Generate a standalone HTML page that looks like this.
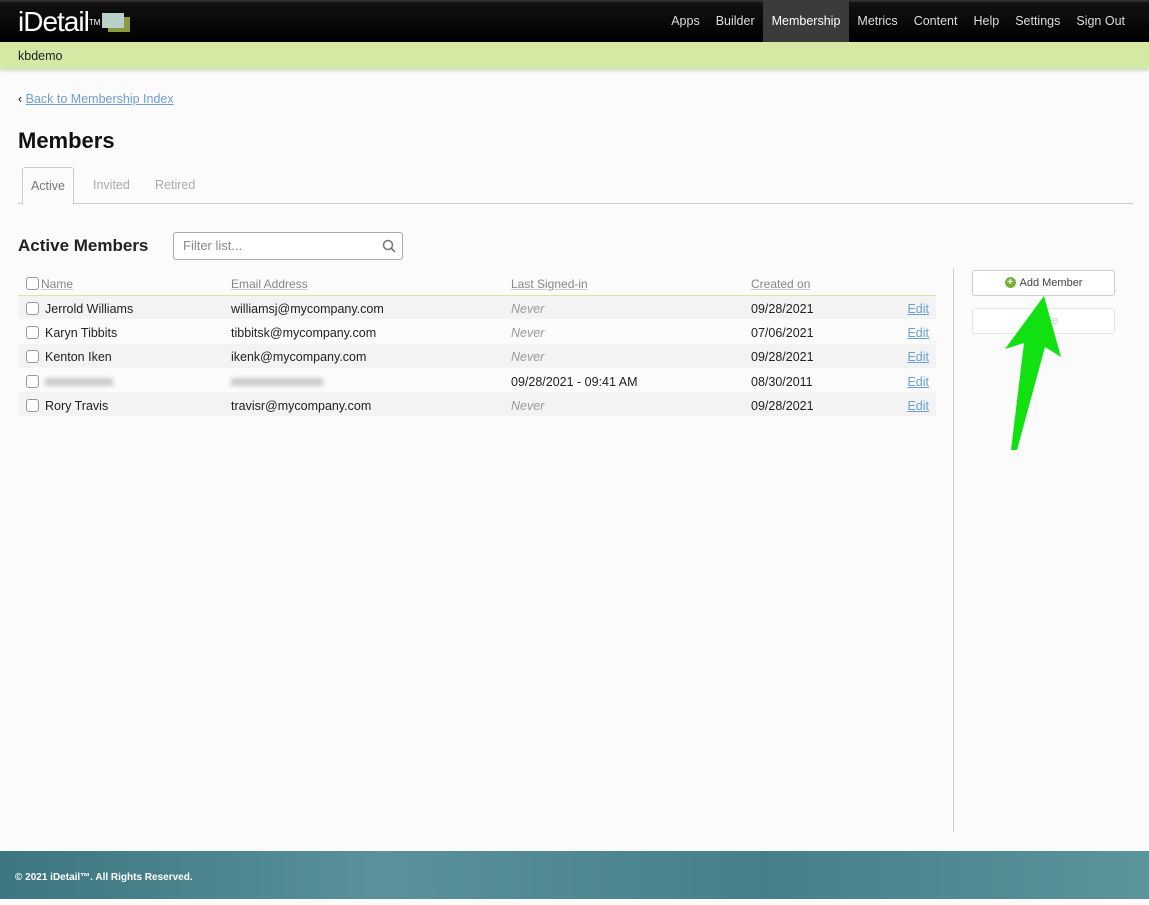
<!DOCTYPE html>
<html><head><meta charset="utf-8"><style>
*{box-sizing:border-box;margin:0;padding:0}
body{width:1149px;height:899px;position:relative;background:#fbfbfb;font-family:"Liberation Sans",Arial,sans-serif;overflow:hidden;font-size:13px;color:#222}
.top{position:absolute;left:0;top:0;width:1149px;height:42px;background:linear-gradient(#3a3a3a 0,#111 3px,#000 100%)}
.logo{position:absolute;left:18px;top:8px;color:#fff;font-size:28px;letter-spacing:-1px;line-height:28px}
.logo sup{font-size:8px;vertical-align:top;position:relative;top:1px;letter-spacing:0}
.nav{position:absolute;right:16px;top:0;display:flex;height:42px}
.nav a{color:#ddd;text-decoration:none;font-size:12.5px;line-height:43px;padding:0 8px}
.nav a.on{background:#3b3b3b;color:#fff;padding:0 9px}
.sub{position:absolute;top:42px;left:0;width:1149px;height:27px;background:#d5e9a4;font-size:12.5px;line-height:28px;padding-left:18px;box-shadow:0 2px 3px rgba(0,0,0,.15)}
a.l{color:#6d9ed1;text-decoration:underline}
.back{position:absolute;left:18px;top:92px;font-size:12.5px}
h1{position:absolute;left:18px;top:128px;font-size:22px;font-weight:bold;color:#111}
.tabs{position:absolute;left:18px;top:203px;width:1115px;border-top:1px solid #ccc}
.tab{position:absolute;top:-37px;height:37px;line-height:37px;font-size:12.5px;color:#aaa}
.tab.on{left:4px;width:52px;border:1px solid #ccc;border-bottom:1px solid #fbfbfb;background:#fbfbfb;color:#777;text-align:center;border-radius:3px 3px 0 0;height:38px}
h2{position:absolute;left:18px;top:236px;font-size:17px;font-weight:bold;color:#222}
.filter{position:absolute;left:173px;top:232px;width:230px;height:28px;border:1px solid #aaa;border-radius:3px;background:#fff;color:#888;font-size:13px;line-height:26px;padding-left:9px}
table{position:absolute;left:18px;top:271px;width:918px;border-collapse:collapse}
th{font-weight:normal;text-align:left;color:#888;font-size:12px;height:24px;padding-top:2px;border-bottom:1px solid #d5e9a4;text-decoration:underline;text-decoration-color:#ccc}
td{height:24.3px;font-size:12.5px;padding-top:3px}
tr:nth-child(even) td{background:#f3f3f3}
td:last-child{text-align:right;padding-right:7px}
.cb{display:inline-block;width:13px;height:13px;border:1px solid #999;border-radius:3px;background:#fff;vertical-align:middle;margin:0 6px 0 8px;position:relative;top:-1px}
i{color:#999}
.vl{position:absolute;left:953px;top:269px;width:1px;height:563px;background:#ccc}
.btn{position:absolute;left:972px;width:143px;height:26px;border:1px solid #ccc;border-radius:3px;background:#fff;text-align:center;font-size:11px;line-height:24px;color:#444}
.foot{position:absolute;left:0;top:851px;width:1149px;height:48px;background:linear-gradient(90deg,#3d7680,#5a919a,#477f89,#5c949c);color:#fff;font-size:10px;font-weight:bold;line-height:54px;padding-left:15px}
.blur{display:inline-block;height:8px;background:#ccc;filter:blur(2px);vertical-align:middle}
</style></head><body>
<div class="top"><div class="logo">iDetail<sup>TM</sup><span style="display:inline-block;width:22px;height:15px;background:#b8d0c8;margin-left:2px;box-shadow:6px 4px 0 #8a9a40;vertical-align:middle;position:relative;top:-3px"></span></div>
<div class="nav"><a>Apps</a><a>Builder</a><a class="on">Membership</a><a>Metrics</a><a>Content</a><a>Help</a><a>Settings</a><a>Sign Out</a></div></div>
<div class="sub">kbdemo</div>
<div class="back">‹ <a class="l">Back to Membership Index</a></div>
<h1>Members</h1>
<div class="tabs"><div class="tab on">Active</div><div class="tab" style="left:75px">Invited</div><div class="tab" style="left:137px">Retired</div></div>
<h2>Active Members</h2>
<div class="filter">Filter list...<svg style="position:absolute;right:6px;top:6px" width="14" height="14"><circle cx="6" cy="6" r="4.5" fill="none" stroke="#777" stroke-width="1.5"/><line x1="9" y1="9" x2="13" y2="13" stroke="#777" stroke-width="1.6"/></svg></div>
<table>
<tr><th style="width:213px"><span class="cb" style="margin-right:2px"></span>Name</th><th style="width:280px">Email Address</th><th style="width:240px">Last Signed-in</th><th>Created on</th><th></th></tr>
<tr><td><span class="cb"></span>Jerrold Williams</td><td>williamsj@mycompany.com</td><td><i>Never</i></td><td>09/28/2021</td><td><a class="l">Edit</a></td></tr>
<tr><td><span class="cb"></span>Karyn Tibbits</td><td>tibbitsk@mycompany.com</td><td><i>Never</i></td><td>07/06/2021</td><td><a class="l">Edit</a></td></tr>
<tr><td><span class="cb"></span>Kenton Iken</td><td>ikenk@mycompany.com</td><td><i>Never</i></td><td>09/28/2021</td><td><a class="l">Edit</a></td></tr>
<tr><td><span class="cb"></span><span class="blur" style="width:68px"></span></td><td><span class="blur" style="width:92px"></span></td><td>09/28/2021 - 09:41 AM</td><td>08/30/2011</td><td><a class="l">Edit</a></td></tr>
<tr><td><span class="cb"></span>Rory Travis</td><td>travisr@mycompany.com</td><td><i>Never</i></td><td>09/28/2021</td><td><a class="l">Edit</a></td></tr>
</table>
<div class="vl"></div>
<div class="btn" style="top:270px"><span style="display:inline-block;width:11px;height:11px;border-radius:50%;background:#7ab03e;color:#fff;font-size:10px;line-height:11px;font-weight:bold;vertical-align:middle;margin-right:4px;position:relative;top:-1px">+</span>Add Member</div>
<div class="btn" style="top:308px;color:#ccc;border-color:#e5e5e5">Retire</div>
<svg style="position:absolute;left:0;top:0" width="1149" height="899"><polygon points="1044,296 1061,357 1045,347 1017,450 1011,450 1024,343 1005,349" fill="#11e011"/></svg>
<div class="foot">© 2021 iDetail™.  All Rights Reserved.</div>
</body></html>
